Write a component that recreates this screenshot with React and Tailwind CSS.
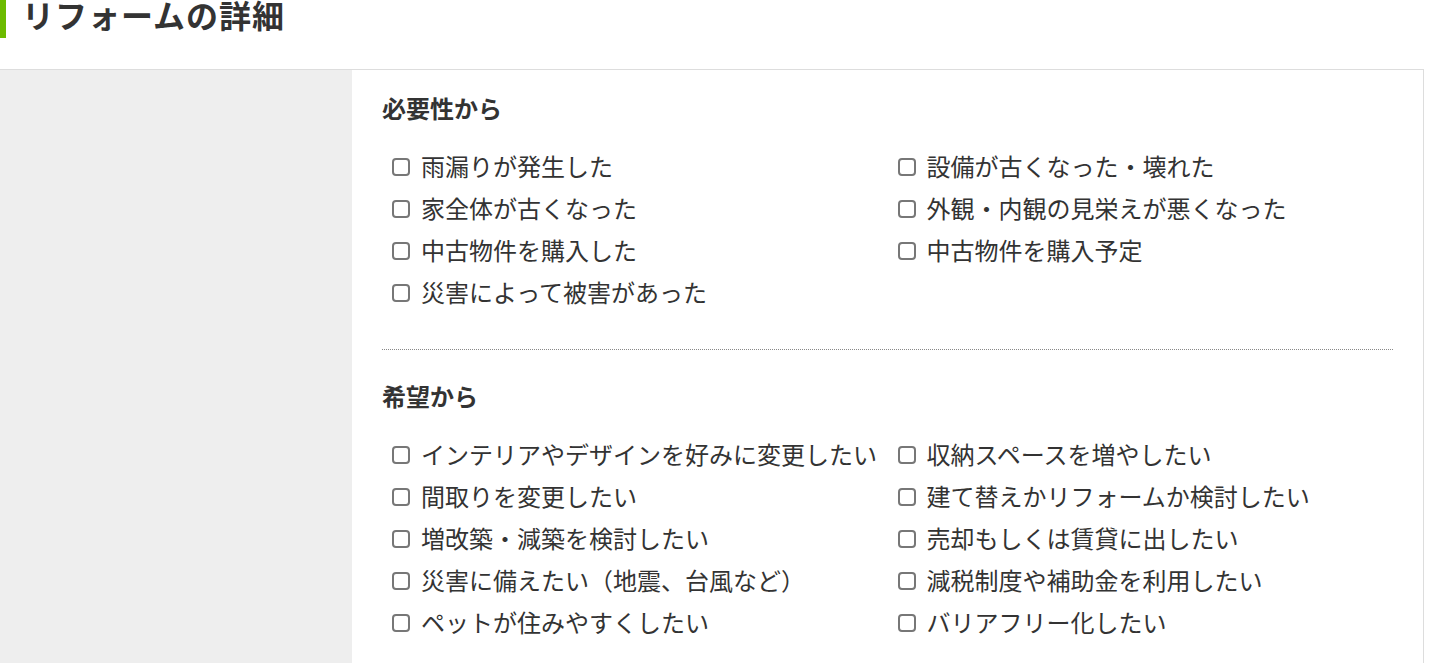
import React from 'react';

const needs = [
  '雨漏りが発生した',
  '設備が古くなった・壊れた',
  '家全体が古くなった',
  '外観・内観の見栄えが悪くなった',
  '中古物件を購入した',
  '中古物件を購入予定',
  '災害によって被害があった',
];

const wishes = [
  'インテリアやデザインを好みに変更したい',
  '収納スペースを増やしたい',
  '間取りを変更したい',
  '建て替えかリフォームか検討したい',
  '増改築・減築を検討したい',
  '売却もしくは賃貸に出したい',
  '災害に備えたい（地震、台風など）',
  '減税制度や補助金を利用したい',
  'ペットが住みやすくしたい',
  'バリアフリー化したい',
];

const CheckItem = ({ label }) => (
  <label className="flex items-center h-[42px] pl-[10px] whitespace-nowrap">
    <input
      type="checkbox"
      className="appearance-none w-[18px] h-[18px] m-0 mt-[2px] shrink-0 bg-white border-2 border-[#777] rounded-[4px]"
    />
    <span className="ml-[11px]">{label}</span>
  </label>
);

const Group = ({ title, items }) => (
  <div>
    <h3 className="font-bold leading-[36px]">{title}</h3>
    <div className="grid grid-cols-2 mt-[19px]">
      {items.map((item) => (
        <CheckItem key={item} label={item} />
      ))}
    </div>
  </div>
);

const App = () => {
  return (
    <div
      className="bg-white text-[#333] text-[24px] overflow-hidden h-[664px]"
      style={{ fontFamily: '"Noto Sans CJK JP", "Noto Sans", sans-serif' }}
    >
      <div className="-mt-[10px] h-[48px] border-l-[6px] border-[#6cbb00] pl-4">
        <h2 className="text-[32px] font-bold leading-[48px] tracking-[1px]">リフォームの詳細</h2>
      </div>

      <div className="mt-[31px] w-[1424px] flex border-t border-r border-[#dddddd]">
        <div className="w-[352px] bg-[#eeeeee] shrink-0"></div>
        <div className="flex-1 px-[30px] pt-[20px] pb-[20px]">
          <Group title="必要性から" items={needs} />
          <div className="mt-[36px] border-t border-dotted border-[#888]"></div>
          <div className="mt-[28px]">
            <Group title="希望から" items={wishes} />
          </div>
        </div>
      </div>
    </div>
  );
};

export default App;
